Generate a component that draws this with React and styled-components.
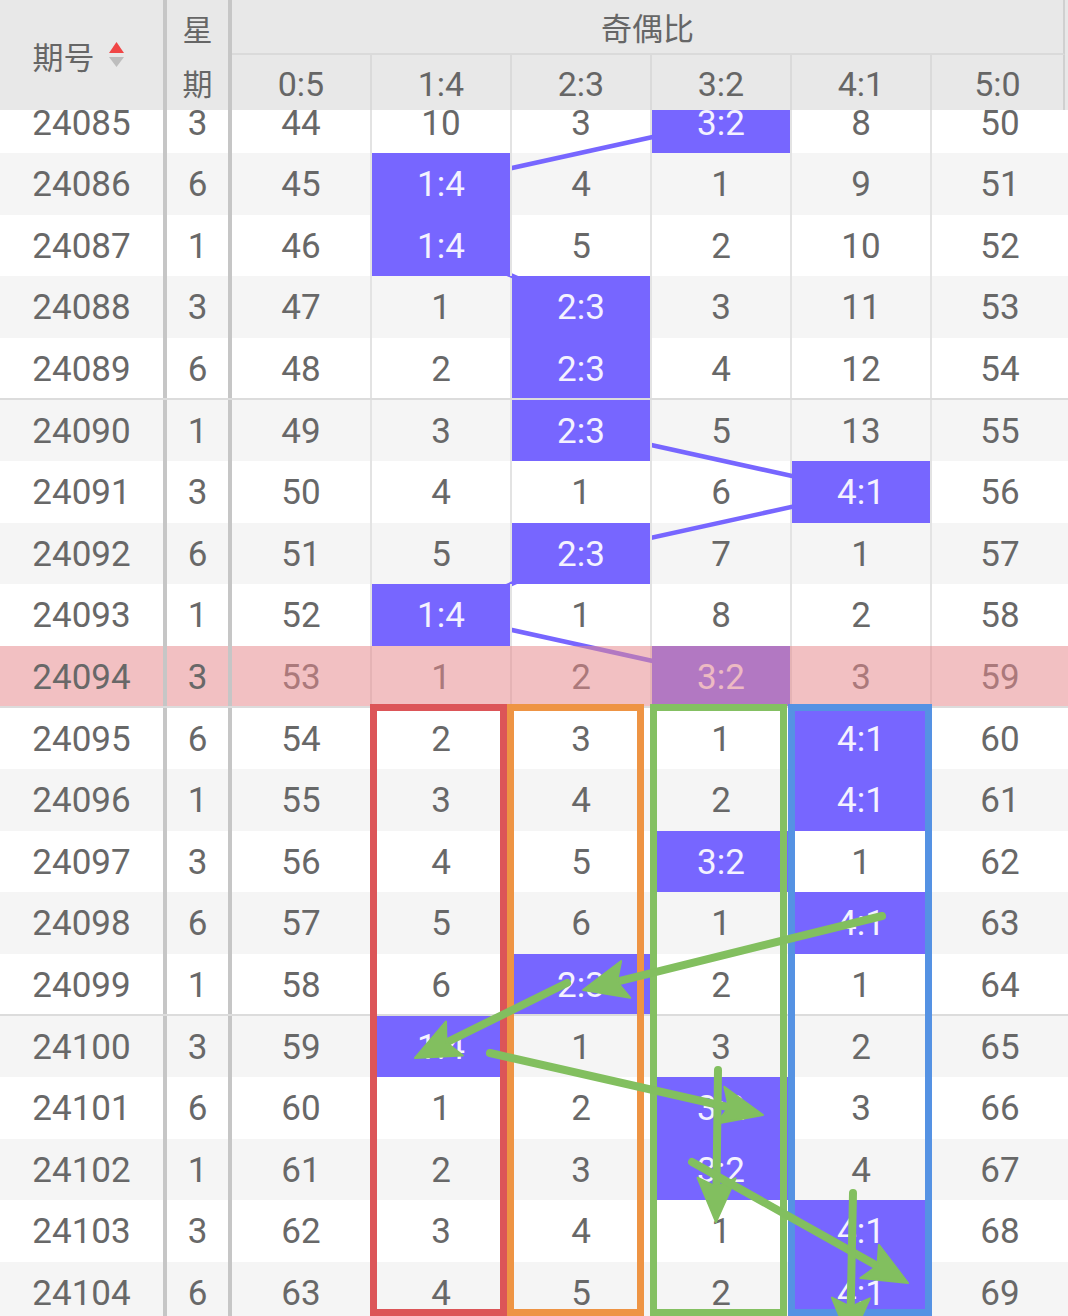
import React from 'react'
import styled, { createGlobalStyle } from 'styled-components'

const ROW_H = 61.6
const SCROLL = 18.6
const LABELS = ['0:5', '1:4', '2:3', '3:2', '4:1', '5:0']
const COL_X = [302, 442, 582, 722, 862, 1000]

// missing counts per ratio column, null = hit
const rows = [
  ['24085', 3, [44, 10, 3, null, 8, 50]],
  ['24086', 6, [45, null, 4, 1, 9, 51]],
  ['24087', 1, [46, null, 5, 2, 10, 52]],
  ['24088', 3, [47, 1, null, 3, 11, 53]],
  ['24089', 6, [48, 2, null, 4, 12, 54]],
  ['24090', 1, [49, 3, null, 5, 13, 55]],
  ['24091', 3, [50, 4, 1, 6, null, 56]],
  ['24092', 6, [51, 5, null, 7, 1, 57]],
  ['24093', 1, [52, null, 1, 8, 2, 58]],
  ['24094', 3, [53, 1, 2, null, 3, 59]],
  ['24095', 6, [54, 2, 3, 1, null, 60]],
  ['24096', 1, [55, 3, 4, 2, null, 61]],
  ['24097', 3, [56, 4, 5, null, 1, 62]],
  ['24098', 6, [57, 5, 6, 1, null, 63]],
  ['24099', 1, [58, 6, null, 2, 1, 64]],
  ['24100', 3, [59, null, 1, 3, 2, 65]],
  ['24101', 6, [60, 1, 2, null, 3, 66]],
  ['24102', 1, [61, 2, 3, null, 4, 67]],
  ['24103', 3, [62, 3, 4, 1, null, 68]],
  ['24104', 6, [63, 4, 5, 2, null, 69]],
]

const HIGHLIGHT = '24094'

const boxes = [
  { x: 373.5, w: 130, color: '#dc5558' },
  { x: 510.5, w: 130, color: '#ee9444' },
  { x: 653.5, w: 130, color: '#84c062' },
  { x: 791.5, w: 137, color: '#5592e3' },
]

const arrows = [
  [[882, 916], [583, 990]],
  [[567, 983], [415, 1058]],
  [[490, 1053], [763, 1115]],
  [[718, 1070], [716, 1222]],
  [[692, 1162], [908, 1283]],
  [[853, 1193], [850, 1342]],
]

const GlobalStyle = createGlobalStyle`
  html, body {
    margin: 0;
    padding: 0;
    background: #fff;
  }
  body {
    font-family: Roboto, "Noto Sans", "Noto Sans CJK SC", sans-serif;
    color: #666;
  }
`

const Arrow = ({ from, to, head = 44, wing = 19 }) => {
  const [x1, y1] = from
  const [x2, y2] = to
  const len = Math.hypot(x2 - x1, y2 - y1)
  const ux = (x2 - x1) / len
  const uy = (y2 - y1) / len
  const bx = x2 - ux * head
  const by = y2 - uy * head
  const px = -uy
  const py = ux
  const notchX = bx + ux * 9
  const notchY = by + uy * 9
  const points = [
    `${x2},${y2}`,
    `${bx + px * wing},${by + py * wing}`,
    `${notchX},${notchY}`,
    `${bx - px * wing},${by - py * wing}`,
  ].join(' ')
  return (
    <g>
      <line x1={x1} y1={y1} x2={notchX} y2={notchY} stroke="#82bf5f" strokeWidth="8" strokeLinecap="round" />
      <polygon points={points} fill="#82bf5f" stroke="#82bf5f" strokeWidth="2" strokeLinejoin="round" />
    </g>
  )
}

const SortIcon = () => (
  <svg width="17" height="28" viewBox="0 0 17 28">
    <polygon points="1,12 8.5,1 16,12" fill="#f04646" />
    <polygon points="1,16 16,16 8.5,26" fill="#bdbdbd" />
  </svg>
)

const App = () => {
  const hits = rows.map(r => r[2].indexOf(null))
  const center = i => ROW_H * i + ROW_H / 2

  return (
    <Page>
      <GlobalStyle />
      <Header>
        <IssueHead>
          <span>期号</span>
          <SortIcon />
        </IssueHead>
        <WeekHead>
          <span>星</span>
          <span>期</span>
        </WeekHead>
        <GroupHead>奇偶比</GroupHead>
        {LABELS.map((l, k) => (
          <SubHead key={l} $last={k === LABELS.length - 1}>{l}</SubHead>
        ))}
      </Header>

      <Viewport>
        <Body>
          <TrendLines width="1068" height={rows.length * ROW_H}>
            {hits.slice(0, 9).map((c, i) => (
              <line
                key={i}
                x1={COL_X[c]}
                y1={center(i)}
                x2={COL_X[hits[i + 1]]}
                y2={center(i + 1)}
                stroke="#7766ff"
                strokeWidth="4.5"
              />
            ))}
          </TrendLines>

          {rows.map(([no, week, vals], i) => {
            const pink = no === HIGHLIGHT
            const last = no.endsWith('4') || no.endsWith('9')
            return (
              <Row key={no} $alt={i % 2 === 1 && !pink} $sep={last}>
                <IssueCell $pink={pink}>{no}</IssueCell>
                <WeekCell $pink={pink}>{week}</WeekCell>
                {vals.map((v, k) => (
                  <RatioCell key={k} $hit={v === null} $last={k === 5}>
                    {v === null ? LABELS[k] : v}
                  </RatioCell>
                ))}
                {pink && <PinkWash />}
              </Row>
            )
          })}
        </Body>
      </Viewport>

      <Marks width="1068" height="1316" viewBox="0 0 1068 1316">
        {boxes.map(b => (
          <rect
            key={b.color}
            x={b.x}
            y="707.5"
            width={b.w}
            height="605"
            fill="none"
            stroke={b.color}
            strokeWidth="7"
          />
        ))}
        {arrows.map(([from, to], i) => (
          <Arrow key={i} from={from} to={to} />
        ))}
      </Marks>
    </Page>
  )
}

const Page = styled.div`
  position: relative;
  width: 1068px;
  height: 1316px;
  overflow: hidden;
  background: #fff;
`

const Header = styled.div`
  position: relative;
  z-index: 5;
  display: grid;
  grid-template-columns: 167px 65px repeat(5, 140px) 133px;
  grid-template-rows: 55px 55px;
  height: 110px;
  background: #e8e8e8;
  color: #666;
`

const HeadCell = styled.div`
  display: flex;
  align-items: center;
  justify-content: center;
  box-sizing: border-box;
  font-family: "Noto Sans CJK SC", "Noto Sans", sans-serif;
  font-weight: 400;
`

const IssueHead = styled(HeadCell)`
  grid-column: 1;
  grid-row: 1 / span 2;
  gap: 13px;
  padding-right: 6px;
  font-size: 31px;
  border-right: 4px solid #c6c6c6;
`

const WeekHead = styled(HeadCell)`
  grid-column: 2;
  grid-row: 1 / span 2;
  flex-direction: column;
  font-size: 30px;
  line-height: 54px;
  border-right: 4px solid #c6c6c6;
`

const GroupHead = styled(HeadCell)`
  grid-column: 3 / span 6;
  grid-row: 1;
  font-size: 31px;
  border-bottom: 2px solid #dadada;
  border-right: 2px solid #d0d0d0;
`

const SubHead = styled(HeadCell)`
  grid-row: 2;
  font-family: Roboto, "Noto Sans", sans-serif;
  font-size: 34px;
  padding-top: 2px;
  border-right: 2px solid ${p => (p.$last ? '#d0d0d0' : '#dadada')};
`

const Viewport = styled.div`
  height: 1206px;
  overflow: hidden;
`

const Body = styled.div`
  position: relative;
  margin-top: -${SCROLL}px;
`

const TrendLines = styled.svg`
  position: absolute;
  top: 0;
  left: 0;
  z-index: 1;
  pointer-events: none;
`

const Row = styled.div`
  position: relative;
  display: grid;
  grid-template-columns: 167px 65px repeat(5, 140px) 136px;
  height: ${ROW_H}px;
  background: ${p => (p.$alt ? '#f5f5f5' : '#fff')};

  &::after {
    content: '';
    display: ${p => (p.$sep ? 'block' : 'none')};
    position: absolute;
    left: 0;
    right: 0;
    bottom: -1px;
    height: 2px;
    background: #dcdcdc;
    z-index: 3;
  }
`

const Cell = styled.div`
  display: flex;
  align-items: center;
  justify-content: center;
  box-sizing: border-box;
  padding-top: 2px;
  font-size: 35px;
  font-weight: 400;
  color: #686868;
`

const IssueCell = styled(Cell)`
  border-right: 4px solid #c6c6c6;
  background: ${p => (p.$pink ? '#f2c0c2' : 'transparent')};
`

const WeekCell = styled(Cell)`
  border-right: 4px solid #c6c6c6;
  background: ${p => (p.$pink ? '#f2c0c2' : 'transparent')};
`

const RatioCell = styled(Cell)`
  position: relative;
  z-index: ${p => (p.$hit ? 2 : 'auto')};
  border-right: ${p => (p.$last ? 'none' : '2px solid #e3e3e3')};
  background: ${p => (p.$hit ? '#7766ff' : 'transparent')};
  color: ${p => (p.$hit ? '#f4f2ff' : '#686868')};
`

const PinkWash = styled.div`
  position: absolute;
  top: 0;
  bottom: 0;
  left: 232px;
  right: 0;
  z-index: 3;
  background: rgba(230, 136, 140, 0.53);
`

const Marks = styled.svg`
  position: absolute;
  top: 0;
  left: 0;
  z-index: 10;
  pointer-events: none;
`

export default App
